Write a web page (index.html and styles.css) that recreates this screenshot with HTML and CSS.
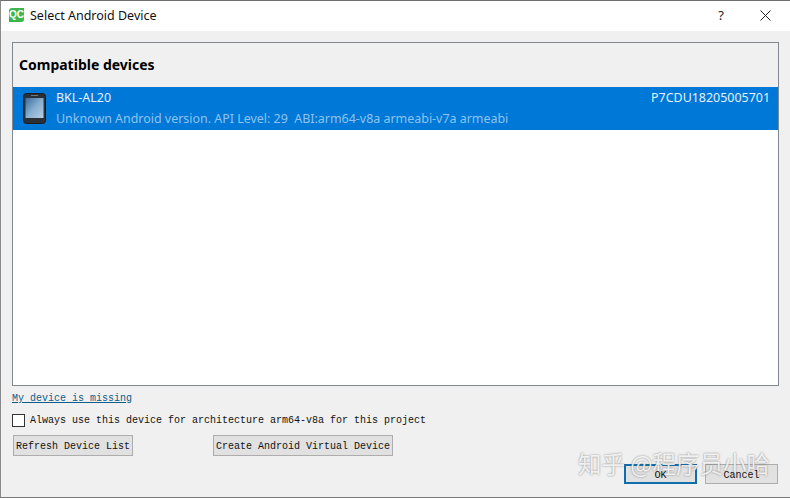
FILE: index.html
```html
<!DOCTYPE html>
<html lang="en">
<head>
    <meta charset="UTF-8">
    <meta name="viewport" content="width=device-width, initial-scale=1.0">
    <title>Select Android Device</title>
    <link rel="stylesheet" href="styles.css">
</head>
<body>
    <div class="dialog">
        <div class="titlebar">
            <span class="qc-logo">QC</span>
            <span class="title">Select Android Device</span>
            <span class="help">?</span>
            <svg class="close" width="11" height="11" viewBox="0 0 11 11">
                <path d="M0.5 0.5L10.5 10.5M10.5 0.5L0.5 10.5" stroke="#222" stroke-width="1" fill="none"/>
            </svg>
        </div>
        <div class="content">
            <div class="device-list">
                <div class="list-header">Compatible devices</div>
                <div class="device-row">
                    <svg class="phone" width="23" height="31" viewBox="0 0 23 31">
                        <defs>
                            <linearGradient id="screen" x1="0" y1="0" x2="1" y2="1">
                                <stop offset="0" stop-color="#3a6b98"/>
                                <stop offset="0.5" stop-color="#86aed0"/>
                                <stop offset="1" stop-color="#b9cfe0"/>
                            </linearGradient>
                        </defs>
                        <rect x="0.5" y="0.5" width="22" height="30" rx="3" fill="#2b3036" stroke="#1a1d21"/>
                        <rect x="2.5" y="5" width="18" height="20" fill="url(#screen)"/>
                        <rect x="8" y="2" width="7" height="1" fill="#70767c"/>
                    </svg>
                    <div class="device-text">
                        <div class="device-top">
                            <span>BKL-AL20</span>
                            <span>P7CDU18205005701</span>
                        </div>
                        <div class="device-info">Unknown Android version. API Level: 29&nbsp; ABI:arm64-v8a armeabi-v7a armeabi</div>
                    </div>
                </div>
                <div class="list-empty"></div>
            </div>
            <a class="missing-link" href="#">My device is missing</a>
            <label class="always-row">
                <span class="checkbox"></span>
                <span>Always use this device for architecture arm64-v8a for this project</span>
            </label>
            <div class="action-row">
                <button class="btn btn-refresh">Refresh Device List</button>
                <button class="btn btn-create">Create Android Virtual Device</button>
            </div>
            <div class="footer-row">
                <button class="btn btn-ok"><span class="btn-label">OK</span></button>
                <button class="btn btn-cancel"><span class="btn-label">Cancel</span></button>
            </div>
        </div>
        <div class="watermark">知乎 @程序员小哈</div>
    </div>
</body>
</html>
```

FILE: styles.css
```css
html, body {
    margin: 0;
    padding: 0;
}
body {
    width: 790px;
    height: 498px;
    overflow: hidden;
    background-color: #f0f0f0;
}
.dialog {
    position: relative;
    box-sizing: border-box;
    width: 790px;
    height: 498px;
    display: flex;
    flex-direction: column;
    border-top: 1px solid #6f6f6f;
    border-left: 1px solid #8a8a8a;
    border-bottom: 1px solid #777;
}
.titlebar {
    height: 30px;
    flex: none;
    display: flex;
    align-items: center;
    padding-bottom: 2px;
    box-sizing: border-box;
    background-color: #fff;
    font-family: "Noto Sans", sans-serif;
    font-size: 12.5px;
    color: #111;
}
.qc-logo {
    width: 15px;
    height: 14px;
    margin-left: 8px;
    border-radius: 3px 0 3px 0;
    background-color: #3cb54a;
    color: #fff;
    font-family: "Liberation Sans", sans-serif;
    font-size: 10px;
    font-weight: bold;
    line-height: 14px;
    text-align: center;
}
.title {
    margin-left: 6px;
    flex: 1;
}
.help {
    margin-right: 36px;
    font-size: 13px;
    color: #222;
}
.close {
    margin-right: 19px;
}
.content {
    flex: 1;
    display: flex;
    flex-direction: column;
    padding: 11px 11px 0;
    background-color: #f0f0f0;
}
.device-list {
    box-sizing: border-box;
    width: 767px;
    height: 344px;
    flex: none;
    display: flex;
    flex-direction: column;
    border: 1px solid #828790;
    background-color: #fff;
}
.list-header {
    height: 44px;
    flex: none;
    padding-left: 6px;
    background-color: #f0f0f0;
    font-family: "Noto Sans", sans-serif;
    font-size: 14px;
    font-weight: bold;
    line-height: 43px;
    color: #000;
}
.device-row {
    height: 43px;
    flex: none;
    display: flex;
    align-items: center;
    background-color: #0078d7;
    font-family: "Noto Sans", sans-serif;
    font-size: 12.45px;
}
.phone {
    margin-left: 10px;
    flex: none;
}
.device-text {
    flex: 1;
    margin-left: 10px;
    margin-right: 8px;
}
.device-top {
    display: flex;
    justify-content: space-between;
    color: #e6f1fb;
    line-height: 20px;
}
.device-info {
    margin-top: 1px;
    color: #8fc3ee;
    line-height: 20px;
}
.list-empty {
    flex: 1;
}
.missing-link {
    display: block;
    margin-top: 6px;
    height: 13px;
    font-family: "Liberation Mono", monospace;
    font-size: 10px;
    line-height: 13px;
    color: #0b5e8c;
    white-space: nowrap;
    width: 120px;
}
.always-row {
    display: flex;
    align-items: center;
    margin-top: 8px;
    height: 14px;
    font-family: "Liberation Mono", monospace;
    font-size: 10px;
    color: #111;
}
.checkbox {
    box-sizing: border-box;
    width: 13px;
    height: 13px;
    margin-right: 5px;
    border: 1px solid #333;
    background-color: #fff;
}
.action-row {
    display: flex;
    margin-top: 8px;
    padding-left: 1px;
}
.btn {
    box-sizing: border-box;
    padding: 2px 0 0;
    height: 21px;
    border: 1px solid #adadad;
    background-color: #e1e1e1;
    font-family: "Liberation Mono", monospace;
    font-size: 10px;
    color: #111;
}
.btn-refresh {
    width: 120px;
}
.btn-create {
    width: 180px;
    margin-left: 80px;
}
.footer-row {
    display: flex;
    justify-content: flex-end;
    gap: 8px;
    margin-top: 8px;
    padding-right: 1px;
}
.btn-ok {
    width: 73px;
    height: 20px;
    border: 2px solid #0f6cad;
}
.btn-cancel {
    width: 73px;
    height: 20px;
}
/* labels stay readable above the watermark */
.btn-label {
    position: relative;
    z-index: 2;
}
.watermark {
    position: absolute;
    z-index: 1;
    left: 577px;
    top: 447px;
    font-family: "Noto Sans CJK SC", sans-serif;
    font-size: 23.5px;
    line-height: 30px;
    white-space: nowrap;
    color: rgba(255, 255, 255, 0.85);
    text-shadow: 0 0 2px rgba(80, 80, 80, 0.7);
}
```
